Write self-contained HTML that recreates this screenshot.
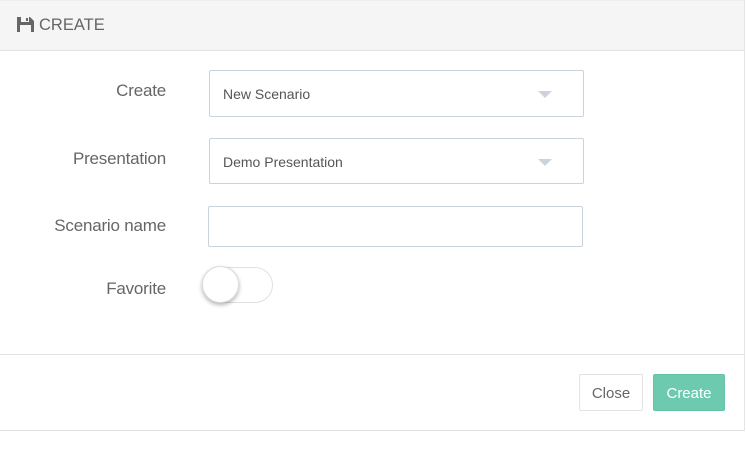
<!DOCTYPE html>
<html><head><style>
*{box-sizing:border-box;margin:0;padding:0}
body{width:746px;height:455px;background:#fff;font-family:"Liberation Sans",sans-serif;position:relative;overflow:hidden}
.panel{position:absolute;left:0;top:0;width:745px;height:431px;border-right:1px solid #e5e5e5;border-bottom:1px solid #e0e0e0}
.hd{position:absolute;left:0;top:0;width:744px;height:51px;background:#f5f5f5;border-bottom:1px solid #e3e3e3;border-top:1px solid #eee}
.hd span{position:absolute;left:39px;top:15px;font-size:16.5px;color:#666}
.lbl{position:absolute;right:578px;font-size:17px;color:#666;text-align:right;letter-spacing:-0.2px}
.sel{position:absolute;left:209px;width:375px;border:1px solid #c9d3dd;border-radius:2px;font-size:14px;color:#555;padding-left:13px}
.sel:after{content:"";position:absolute;right:31px;top:20px;border-left:7px solid transparent;border-right:7px solid transparent;border-top:7px solid #ccd3db}
.ft{position:absolute;left:0;top:354px;width:744px;border-top:1px solid #e3e3e3}
.btn{position:absolute;top:374px;height:37px;border-radius:2px;font-size:15px;line-height:38px;text-align:center}
</style></head><body>
<div class="panel">
<div class="hd">
<svg style="position:absolute;left:17px;top:15px" width="17" height="16" viewBox="0 0 17 16"><path d="M0 1h13l4 4v11H0z" fill="#666"/><rect x="4" y="1" width="8" height="5" fill="#f5f5f5"/><rect x="9" y="2" width="2" height="3" fill="#666"/><rect x="3" y="9" width="11" height="7" fill="#f5f5f5"/></svg>
<span>CREATE</span></div>
<div class="lbl" style="top:81px">Create</div>
<div class="sel" style="top:70px;height:47px;line-height:47px">New Scenario</div>
<div class="lbl" style="top:149px">Presentation</div>
<div class="sel" style="top:138px;height:46px;line-height:46px">Demo Presentation</div>
<div class="lbl" style="top:216px">Scenario name</div>
<div style="position:absolute;left:208px;top:206px;width:375px;height:41px;border:1px solid #c9d3dd;border-radius:2px"></div>
<div class="lbl" style="top:279px">Favorite</div>
<div style="position:absolute;left:203px;top:267px;width:70px;height:36px;border:1px solid #e0e0e0;border-radius:18px"></div>
<div style="position:absolute;left:202px;top:266px;width:37px;height:37px;border-radius:50%;background:#fff;box-shadow:0 2px 4px rgba(0,0,0,.3);border:1px solid #ddd"></div>
<div class="ft"></div>
<div class="btn" style="left:579px;width:64px;border:1px solid #e3e3e3;color:#666">Close</div>
<div class="btn" style="left:653px;width:72px;background:#6ecaaf;color:#fff;border:1px solid #64c2a6">Create</div>
</div>
</body></html>
